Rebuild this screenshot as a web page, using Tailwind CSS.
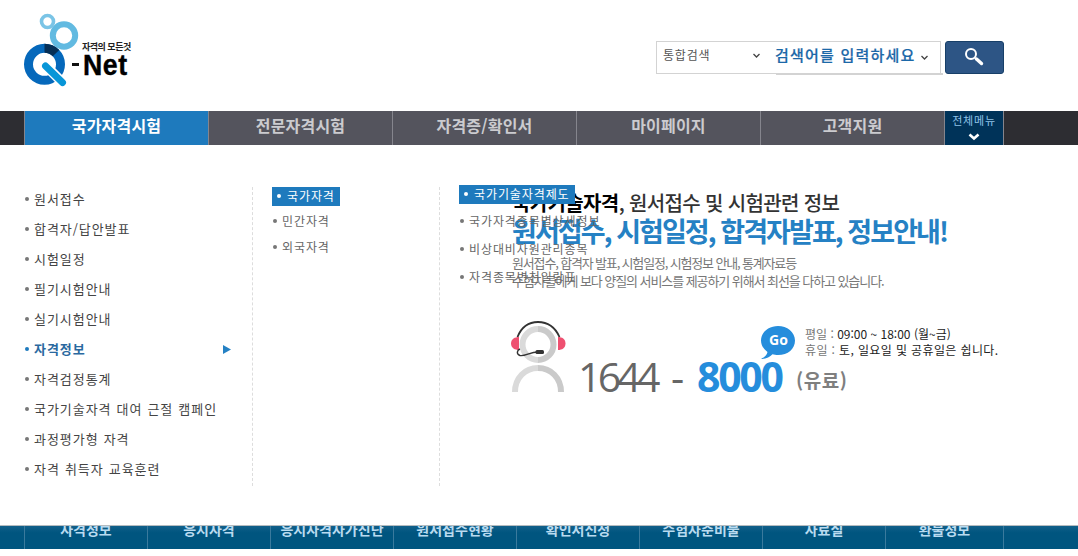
<!DOCTYPE html>
<html lang="ko">
<head>
  <meta charset="UTF-8">
  <meta name="viewport" content="width=device-width, initial-scale=1.0">
  <title>Q-Net 자격의 모든것</title>
  <script src="https://cdn.jsdelivr.net/npm/@tailwindcss/browser@4"></script>
</head>
<body class="bg-white h-[556px] overflow-hidden whitespace-nowrap font-['Noto_Sans_CJK_KR',sans-serif] text-[#444]">

  <!-- header -->
  <header class="h-[111px] pl-6 pr-[74px] flex justify-between">
    <a href="#" class="relative block w-[110px] h-[90px]">
      <svg class="absolute left-0 top-0" width="110" height="90" viewBox="24 0 110 90" fill="none">
        <circle cx="47.5" cy="21.5" r="6" stroke="#7ac4e6" stroke-width="3.6"/>
        <circle cx="64" cy="35.5" r="11.2" stroke="#62bae1" stroke-width="6"/>
        <circle cx="44.5" cy="64.3" r="16" stroke="#0568bb" stroke-width="9"/>
        <path d="M44.500 48.300A16 16 0 0 1 56 53.200" stroke="#062f56" stroke-width="9"/>
        <path d="M45 65L62 82" stroke="#fff" stroke-width="10"/>
        <path d="M45.500 66L62.500 82.500" stroke="#0896d8" stroke-width="7" stroke-linecap="round"/>
        <path d="M72 64.500h7" stroke="#111" stroke-width="3"/>
      </svg>
      <span class="absolute left-[58px] top-[41px] text-[9px] leading-[12px] font-bold tracking-[-0.5px] text-[#222]">자격의 모든것</span>
      <span class="absolute left-[59px] top-[49px] text-[29px] leading-[32px] font-bold tracking-[0.6px] origin-left scale-x-92 text-black [-webkit-text-stroke:0.4px_black] font-['Liberation_Sans',sans-serif]">Net</span>
    </a>

    <form class="flex mt-[41px] h-[33px]">
      <div class="relative w-[285px] h-[33px] border border-[#d3d3d3] flex">
        <div class="w-[118px] pl-[6px] flex items-center text-[12px] leading-[28px] tracking-[0.8px] h-[26px] text-[#555]">통합검색
          <svg class="ml-auto mr-[14px]" width="9" height="7" viewBox="0 0 9 7" fill="none" stroke="#444" stroke-width="1.300"><path d="M1.500 2l3 3 3-3"/></svg>
        </div>
        <div class="flex items-center h-[27px] text-[15px] font-medium tracking-[1.2px] text-[#1c68a8] [-webkit-text-stroke:0.2px_#1c68a8]">검색어를 입력하세요
          <svg class="ml-[5px] mt-[3px]" width="9" height="7" viewBox="0 0 9 7" fill="none" stroke="#444" stroke-width="1.300"><path d="M1.500 2l3 3 3-3"/></svg>
        </div>
        <i class="absolute left-[119px] top-[31px] w-[167px] h-[2px] bg-[#d3d3d3]"></i>
      </div>
      <button type="button" class="ml-1 w-[59px] h-[33px] bg-[#2d5585] border border-[#173f68] rounded-[3px] flex items-center justify-center">
        <svg class="mr-[2px] mb-[2px]" width="20" height="20" viewBox="0 0 20 20" fill="none" stroke="#fff"><circle cx="7" cy="7" r="5" stroke-width="2"/><path d="M11 11l2 2" stroke-width="2"/><path d="M12.500 12l5 4.500" stroke-width="3.400" stroke-linecap="round"/></svg>
      </button>
    </form>
  </header>

  <!-- main nav -->
  <nav class="h-[34px] bg-[#2d2d32] pl-6 flex text-[16px] leading-[28px] font-bold tracking-[0.2px] text-center text-[#cbcbcf]">
    <a href="#" class="w-[184px] border-l border-[#85858d] bg-[#1e7abd] text-white">국가자격시험</a>
    <a href="#" class="w-[184px] border-l border-[#85858d] bg-[#54545d]">전문자격시험</a>
    <a href="#" class="w-[184px] border-l border-[#85858d] bg-[#54545d]">자격증/확인서</a>
    <a href="#" class="w-[184px] border-l border-[#85858d] bg-[#54545d]">마이페이지</a>
    <a href="#" class="w-[184px] border-l border-[#85858d] bg-[#54545d]">고객지원</a>
    <a href="#" class="w-[60px] border-x border-[#85858d] bg-[#003359] text-[11px] leading-[19px] font-normal tracking-[0.8px] text-[#8fc3e8] flex flex-col items-center">전체메뉴
      <svg class="mt-[3px]" width="12" height="8" viewBox="0 0 12 8" fill="none" stroke="#fff" stroke-width="2.600"><path d="M1.500 1.500l4.500 4 4.500-4"/></svg>
    </a>
  </nav>

  <main class="relative h-[380px]">
    <!-- main banner -->
    <section class="pl-[512px] pt-[44px]">
      <p class="text-[20px] leading-[28px] font-medium tracking-[-0.63px] text-[#333]"><b class="text-black">국가기술자격</b>, 원서접수 및 시험관련 정보</p>
      <h2 class="text-[27px] leading-[28px] font-bold tracking-[-1.93px] text-[#2581c4]">원서접수, 시험일정, 합격자발표, 정보안내!</h2>
      <p class="mt-[9px] text-[13px] leading-[18px] tracking-[-1.16px] text-[#777]">원서접수, 합격자 발표, 시험일정, 시험정보 안내, 통계자료등<br><span class="tracking-[-1.07px]">수험자들에게 보다 양질의 서비스를 제공하기 위해서 최선을 다하고 있습니다.</span></p>

      <div class="flex mt-[30px] h-[76px]">
        <svg class="shrink-0 overflow-visible" width="54" height="76" viewBox="0 0 54 76" fill="none">
          <path d="M26 9a15.500 15.500 0 0 0 0 31" stroke="#dadada" stroke-width="6"/>
          <path d="M26 9a15.500 15.500 0 0 1 0 31" stroke="#cacaca" stroke-width="6"/>
          <path d="M3 72c0-14 10-24 23-24" stroke="#dadada" stroke-width="6"/>
          <path d="M26 48c13 0 23 10 23 24" stroke="#cacaca" stroke-width="6"/>
          <path d="M5.500 17c4-10 11-15 20.500-15s17 5 21.500 15" stroke="#333" stroke-width="1.800"/>
          <path d="M7 17v13c-4 0-8-2-8-6.500S3 17 7 17z" fill="#ee5070"/>
          <path d="M46 17v13c4 0 7.500-2 7.500-6.500S50 17 46 17z" fill="#ee5070"/>
          <path d="M8 29c-3 1-4 5 0 6.500 5 1 10-3.500 18-3.500" stroke="#333" stroke-width="1.400"/>
          <rect x="23.500" y="30" width="8.500" height="4" rx="1.500" fill="#333"/>
        </svg>
        <p class="w-[205px] ml-[12px] pt-[28px] text-[41px] leading-[56px] h-[76px] tracking-[-3.8px] text-[#666] font-['Open_Sans',sans-serif] flex">
          <span class="w-[93px]">1644</span><span class="w-[26px]">-</span><b class="tracking-[-2.3px] text-[#258ddc]">8000</b>
        </p>
        <div class="relative ml-[12px] pt-[6px] text-[12px] leading-[16px]">
          <svg class="absolute left-[-34px] top-[6px]" width="36" height="34" viewBox="0 0 36 34"><path d="M17 0c9 0 17 6 17 14.500S27 29 17 29c-2 0-4-.3-5.500-.7C9 31 5 33 0 33c3-1.500 6-4 6.500-7C3 23.500 0 19.500 0 14.500 0 6 8 0 17 0z" fill="#258ddc"/></svg>
          <b class="absolute left-[-26px] top-[11px] text-[14px] leading-[18px] text-white font-['Open_Sans',sans-serif]">Go</b>
          <div class="ml-[10px] text-[#777]">
            <p class="tracking-[0px]">평일 : <span class="text-[#222]">09:00 ~ 18:00 (월~금)</span></p>
            <p class="tracking-[0.38px]">휴일 : <span class="text-[#222]">토, 일요일 및 공휴일은 쉽니다.</span></p>
          </div>
          <p class="mt-[9px] ml-[1px] text-[19px] leading-[26px] font-bold tracking-[0.5px] text-[#7f7f7f]">(유료)</p>
        </div>
      </div>
    </section>

    <!-- dropdown menu over the banner -->
    <div class="absolute inset-x-0 top-0 flex text-[12px] tracking-[0.9px] text-[#666]">
      <ul class="w-[252px] pl-[25px] pt-[39px] text-[13px] leading-[30px] tracking-[0.95px] [word-spacing:0.5px] text-[#444]">
        <li class="flex items-center gap-[5px]"><i class="size-[4px] rounded-full bg-[#777]"></i>원서접수</li>
        <li class="flex items-center gap-[5px]"><i class="size-[4px] rounded-full bg-[#777]"></i>합격자/답안발표</li>
        <li class="flex items-center gap-[5px]"><i class="size-[4px] rounded-full bg-[#777]"></i>시험일정</li>
        <li class="flex items-center gap-[5px]"><i class="size-[4px] rounded-full bg-[#777]"></i>필기시험안내</li>
        <li class="flex items-center gap-[5px]"><i class="size-[4px] rounded-full bg-[#777]"></i>실기시험안내</li>
        <li class="flex items-center gap-[5px] font-bold text-[#2a699f]"><i class="size-[4px] rounded-full bg-[#1e7abd]"></i>자격정보
          <svg class="ml-auto mr-[21px] mt-px" width="8" height="9" viewBox="0 0 8 9"><path d="M0 0l8 4.500L0 9z" fill="#2581c4"/></svg>
        </li>
        <li class="flex items-center gap-[5px]"><i class="size-[4px] rounded-full bg-[#777]"></i>자격검정통계</li>
        <li class="flex items-center gap-[5px]"><i class="size-[4px] rounded-full bg-[#777]"></i>국가기술자격 대여 근절 캠페인</li>
        <li class="flex items-center gap-[5px]"><i class="size-[4px] rounded-full bg-[#777]"></i>과정평가형 자격</li>
        <li class="flex items-center gap-[5px]"><i class="size-[4px] rounded-full bg-[#777]"></i>자격 취득자 교육훈련</li>
      </ul>
      <ul class="w-[187px] h-[299px] mt-[42px] pl-[19px] border-l border-dashed border-[#ddd] leading-[26px]">
        <li class="w-[68px] h-[19px] mb-[2px] pl-[5px] pb-[2px] bg-[#1e7abd] text-white leading-[17px] flex items-center gap-[6px]"><i class="size-[4px] rounded-full bg-white"></i>국가자격</li>
        <li class="flex items-center gap-[5px]"><i class="ml-px size-[4px] rounded-full bg-[#777]"></i>민간자격</li>
        <li class="flex items-center gap-[5px]"><i class="ml-px size-[4px] rounded-full bg-[#777]"></i>외국자격</li>
      </ul>
      <ul class="h-[299px] mt-[42px] pl-[19px] border-l border-dashed border-[#ddd] leading-[28px]">
        <li class="w-[116px] h-[19px] -mt-[2px] mb-[3px] pl-[5px] pb-[2px] bg-[#1e7abd] text-white leading-[17px] flex items-center gap-[6px]"><i class="size-[4px] rounded-full bg-white"></i>국가기술자격제도</li>
        <li class="flex items-center gap-[5px]"><i class="ml-px size-[4px] rounded-full bg-[#777]"></i>국가자격종목별상세정보</li>
        <li class="flex items-center gap-[5px]"><i class="ml-px size-[4px] rounded-full bg-[#777]"></i>비상대비자원관리종목</li>
        <li class="flex items-center gap-[5px]"><i class="ml-px size-[4px] rounded-full bg-[#777]"></i>자격종목변천일람표</li>
      </ul>
    </div>
  </main>

  <!-- quick links, upper part hidden behind the menu -->
  <nav class="h-[24px] pl-6 overflow-hidden border-t border-[#b5bcc0] bg-linear-to-b from-[#11608a] to-[#00557f] to-30% flex text-[14px] leading-[6px] font-bold text-center text-[#b9dbf0]">
    <a href="#" class="w-[123px] border-l border-[#3a7a9d]">자격정보</a>
    <a href="#" class="w-[123px] border-l border-[#3a7a9d]">응시자격</a>
    <a href="#" class="w-[123px] border-l border-[#3a7a9d]">응시자격자가진단</a>
    <a href="#" class="w-[123px] border-l border-[#3a7a9d]">원서접수현황</a>
    <a href="#" class="w-[123px] border-l border-[#3a7a9d]">확인서신청</a>
    <a href="#" class="w-[123px] border-l border-[#3a7a9d]">수험자준비물</a>
    <a href="#" class="w-[123px] border-l border-[#3a7a9d]">자료실</a>
    <a href="#" class="w-[119px] border-x border-[#3a7a9d]">환불정보</a>
  </nav>

</body>
</html>
